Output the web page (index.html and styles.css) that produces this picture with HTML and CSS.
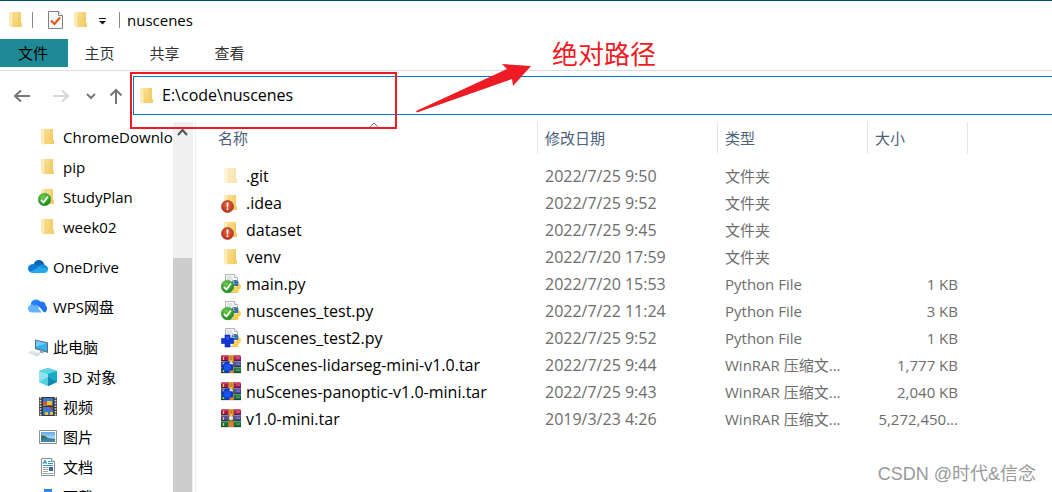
FILE: index.html
```html
<!DOCTYPE html>
<html lang="zh-CN">

<head>
    <meta charset="UTF-8">
    <meta name="viewport" content="width=device-width, initial-scale=1.0">
    <title>nuscenes</title>

    <link rel="stylesheet" href="styles.css">
</head>

<body>
    <!-- Shared icons -->
    <svg class="icon-defs" aria-hidden="true">
        <defs>
            <linearGradient id="folder-front" x1="0" y1="0" x2="1" y2="1">
                <stop offset="0" stop-color="#fbdf93" />
                <stop offset="1" stop-color="#f2cb62" />
            </linearGradient>
            <radialGradient id="green-ball" cx="0.4" cy="0.3" r="0.7">
                <stop offset="0" stop-color="#6fcb4c" />
                <stop offset="1" stop-color="#17881b" />
            </radialGradient>
            <radialGradient id="red-ball" cx="0.5" cy="0.4" r="0.6">
                <stop offset="0" stop-color="#ee6a41" />
                <stop offset="1" stop-color="#b52a14" />
            </radialGradient>
            <linearGradient id="sky" x1="0" y1="0" x2="0" y2="1">
                <stop offset="0" stop-color="#5fa9e8" />
                <stop offset="1" stop-color="#e4f4fb" />
            </linearGradient>
            <linearGradient id="wps-cloud" x1="0" y1="0" x2="1" y2="1">
                <stop offset="0" stop-color="#2494ff" />
                <stop offset="1" stop-color="#1b63ee" />
            </linearGradient>
        </defs>
        <symbol id="folder" viewBox="0 0 20 20">
            <path d="M5 2h10v11h1v4H6z" fill="url(#folder-front)" />
            <path d="M12 2h3v11h-3z" fill="#efc75f" opacity=".5" />
            <path d="M3 2h2l2 2v14l-3-1-1-1z" fill="#fdebb5" />
            <path d="M7 4v13" stroke="#e9c468" stroke-width=".5" />
        </symbol>
        <symbol id="check-ball" viewBox="0 0 20 20">
            <circle cx="6.500" cy="12.500" r="6.300" fill="url(#green-ball)" stroke="#3a9a35" stroke-width=".5" />
            <path d="M3 13l2.500 2.500 4.500-6" fill="none" stroke="#fff" stroke-width="1.800" />
        </symbol>
        <symbol id="alert-ball" viewBox="0 0 20 20">
            <circle cx="6.500" cy="13.500" r="6" fill="url(#red-ball)" stroke="#a8473a" stroke-width=".8" />
            <path d="M5.500 9.500h2l-.4 5h-1.200z" fill="#fff" />
            <circle cx="6.500" cy="16.300" r="1" fill="#fff" />
        </symbol>
        <symbol id="python" viewBox="0 0 20 20">
            <path d="M4.500.5h9l3 3v15h-12z" fill="#f5f5f5" stroke="#b5b5b5" />
            <path d="M13.500.5v3h3" fill="#fff" stroke="#b5b5b5" />
            <path d="M6 3h5M6 5h6" stroke="#c8ccd2" />
            <path d="M10.500 8.500q0-2.500 3.500-2.500t3.500 2.500v3.500h-4q-2.500 0-2.500 2.500H10Q8 14.500 8 12t2.500-2.500h3.500v-.6h-3.500z" fill="#3972a4" />
            <path d="M17.800 9.500h.4q1.800.5 1.800 3t-2 3h-4v.6h3.500v1q0 1.900-3 1.900t-3-2v-2q0-2.300 2.500-2.300h2.500q1.300 0 1.300-2z" fill="#fbce45" />
            <circle cx="12.500" cy="7.700" r=".6" fill="#fff" />
        </symbol>
        <symbol id="plus-badge" viewBox="0 0 20 20">
            <path d="M4 7h5v3.500h3.500v5H9V19H4v-3.500H.5v-5H4z" fill="#1235d4" stroke="#0b1fae" stroke-width=".6" />
            <path d="M5 8.500h3v3H5z" fill="#2458f2" />
        </symbol>
        <symbol id="rar" viewBox="0 0 20 20">
            <path d="M0 1l1.500-1H18l2 1v5H0z" fill="#a81b4b" />
            <path d="M0 1l1.500-1H18l2 1v.8H0z" fill="#d3527b" />
            <path d="M0 6h20v6H0z" fill="#4a4a9c" />
            <path d="M0 6h20v1.200H0z" fill="#8584c7" />
            <path d="M0 12h20v6H0z" fill="#11733a" />
            <path d="M0 12h20v1.200H0z" fill="#4bac68" />
            <path d="M0 5.500h20M0 11.500h20M0 17.700h20" stroke="#262137" stroke-width=".7" />
            <path d="M2.500 2v3M2.500 8v3M2.500 14v3" stroke="#efc54a" stroke-width="1.200" />
            <path d="M15 3h4M15 9h4M15 15h4" stroke="#d6c7d8" stroke-width=".6" />
            <path d="M7 0h6v18H7z" fill="#b9722c" />
            <path d="M8 0h4v6H8z" fill="#f2a93a" />
            <path d="M8.500 2h3M8.500 4h3" stroke="#84521c" stroke-width=".8" />
            <path d="M6.500 7h7v5h-7z" fill="#6a5a4a" />
            <path d="M8 7.500h4v3H8zM9.300 6h1.400v5.500H9.300z" fill="#e9e4dc" />
            <path d="M8 13h4v5H8z" fill="#d18334" />
        </symbol>
        <symbol id="rar-badge" viewBox="0 0 20 20">
            <path d="M4 6.500h4.500V9l3.500.5v5.500l-3.500.7V18H4v-2.300L.8 14.500v-5L4 9z" fill="#0c38c8" />
            <circle cx="6.300" cy="12.200" r="3.500" fill="#1754f0" />
        </symbol>
    </svg>

    <header class="title-bar">
        <svg class="icon"><use href="#folder" /></svg>
        <span class="divider"></span>
        <button type="button" class="quick-button properties" aria-label="属性">
            <svg class="icon" viewBox="0 0 20 20">
                <path d="M3.500 1.500h10l4 4v13h-14z" fill="#f8f8f8" stroke="#828282" />
                <path d="M13.500 1.500v4h4" fill="#fff" stroke="#828282" />
                <path d="M6 10.500l3.500 3.500L15 7.500" fill="none" stroke="#e4551b" stroke-width="2" />
            </svg>
        </button>
        <button type="button" class="quick-button" aria-label="新建文件夹">
            <svg class="icon"><use href="#folder" /></svg>
        </button>
        <button type="button" class="quick-button customize" aria-label="自定义快速访问工具栏">
            <svg width="12" height="10" viewBox="0 0 12 10">
                <path d="M2 3.500h7" stroke="#111" />
                <path d="M2 6h7L5.500 9.500z" fill="#111" />
            </svg>
        </button>
        <span class="divider"></span>
        <span class="window-title">nuscenes</span>
    </header>

    <div class="ribbon">
        <button type="button" class="tab file-tab">文件</button>
        <button type="button" class="tab">主页</button>
        <button type="button" class="tab">共享</button>
        <button type="button" class="tab">查看</button>
    </div>

    <div class="nav-bar">
        <button type="button" class="nav-button back" aria-label="后退">
            <svg width="18" height="14" viewBox="0 0 18 14">
                <path d="M17 7H2M8 1.500L2 7l6 5.500" />
            </svg>
        </button>
        <button type="button" class="nav-button forward" aria-label="前进" disabled>
            <svg width="18" height="14" viewBox="0 0 18 14">
                <path d="M1 7h15M10 1.500L16 7l-6 5.500" />
            </svg>
        </button>
        <button type="button" class="nav-button recent" aria-label="最近浏览的位置">
            <svg width="10" height="8" viewBox="0 0 10 8">
                <path d="M1 2l4 4 4-4" />
            </svg>
        </button>
        <button type="button" class="nav-button up" aria-label="向上">
            <svg width="14" height="18" viewBox="0 0 14 18">
                <path d="M7 17V3M1.500 8.500L7 3l5.500 5.500" />
            </svg>
        </button>
        <div class="address-bar">
            <svg class="icon"><use href="#folder" /></svg>
            <input type="text" class="address-input" aria-label="地址" value="E:\code\nuscenes">
        </div>
    </div>

    <div class="content">
        <nav class="sidebar">
            <div class="tree">
                <div class="tree-group">
                    <a href="#" class="tree-item child"><svg class="icon"><use href="#folder" /></svg>ChromeDownload</a>
                    <a href="#" class="tree-item child"><svg class="icon"><use href="#folder" /></svg>pip</a>
                    <a href="#" class="tree-item child">
                        <svg class="icon"><use href="#folder" /><use href="#check-ball" /></svg>StudyPlan</a>
                    <a href="#" class="tree-item child"><svg class="icon"><use href="#folder" /></svg>week02</a>
                </div>
                <div class="tree-group">
                    <a href="#" class="tree-item">
                        <svg class="icon" viewBox="0 0 20 20">
                            <path d="M5.500 8Q6.500 3 11 3q4 0 5.500 5l-5 4z" fill="#0a63b8" />
                            <path d="M4 15.500Q0 15 0 11.500 0 7.500 5 7q3-.5 6 2l4 3-8 3.500z" fill="#0f7bd7" />
                            <path d="M10 9.500q2-2.500 5.500-1.800Q20 8.500 20 12l-3 2z" fill="#1691df" />
                            <path d="M2 15l9-5 9 2q0 4-4 4H5q-2 0-3-1z" fill="#27a8ea" />
                        </svg>OneDrive</a>
                </div>
                <div class="tree-group">
                    <a href="#" class="tree-item">
                        <svg class="icon" viewBox="0 0 20 20">
                            <path d="M2.500 8.500Q3 2.500 8 2.500q4 0 5.500 4.500l-4 5z" fill="url(#wps-cloud)" />
                            <path d="M9 7q2-3 5-2.500 3.500.5 3.700 4 1.800 1.500 1.300 4-.6 3-3 3z" fill="#2374f5" />
                            <path d="M3.500 15.500Q0 15 0 11.500 0 8 4 7.500q3 0 5 2.500l5 5.500z" fill="#63b5ff" />
                            <path d="M8 8.500q3 .3 6 7" fill="none" stroke="#fff" stroke-width=".8" />
                        </svg>WPS网盘</a>
                </div>
                <div class="tree-group">
                    <a href="#" class="tree-item">
                        <svg class="icon" viewBox="0 0 20 20">
                            <path d="M7 2.500l13 3V16L7 12z" fill="#5a6d7b" />
                            <path d="M8 3.800l11 2.600v8.200L8 11z" fill="#35aef3" />
                            <path d="M8 3.800l11 2.600-11 3z" fill="#6fcbfa" />
                            <path d="M12.500 13.500l3 .9v2l-4-.9z" fill="#9aa5ad" />
                            <path d="M0 15.500l4-1.500 9 2.500-4 2.700z" fill="#c9cfd4" />
                            <path d="M2 15.500l7 2M4 14.800l7 2" stroke="#fff" stroke-width=".6" />
                        </svg>此电脑</a>
                    <a href="#" class="tree-item child">
                        <svg class="icon" viewBox="0 0 20 20">
                            <path d="M1 4l9-3 9 3v11l-9 4-9-4z" fill="#35c2d9" />
                            <path d="M1 4l9 3v12l-9-4z" fill="#8fe3ed" />
                            <path d="M1 4l9-3 9 3-9 3z" fill="#5bd3e2" />
                            <path d="M10 7l9-3v11l-9 4z" fill="#19a9c8" />
                            <path d="M1 15l9-5v9z" fill="#54cfdf" />
                            <path d="M10 10l9 5-9 4z" fill="#128ab0" />
                        </svg>3D 对象</a>
                    <a href="#" class="tree-item child">
                        <svg class="icon" viewBox="0 0 20 20">
                            <path d="M1 0h18v19H1z" fill="#363636" />
                            <path d="M2.500 0v19M17.500 0v19" stroke="#d9d9d9" stroke-width="1.800" stroke-dasharray="1.600 1.200" />
                            <path d="M5 1h10v8H5zM5 10h10v8H5z" fill="#3b78c9" />
                            <path d="M5 5h4v4H5z" fill="#df4f32" />
                            <path d="M9 4h5v4H9z" fill="#e5c439" />
                            <path d="M10 8h4v1h-4zM12 10h3l-1 3h-1z" fill="#bd4126" />
                            <path d="M7 15h3v3H7zM12 15h3v3h-3z" fill="#e3c13c" />
                            <path d="M5 8h3v1H5z" fill="#59b14f" />
                        </svg>视频</a>
                    <a href="#" class="tree-item child">
                        <svg class="icon" viewBox="0 0 20 20">
                            <path d="M1.500 3.500h17v13h-17z" fill="#fff" stroke="#929292" />
                            <path d="M3 5h14v10H3z" fill="url(#sky)" />
                            <path d="M3 8q4 0 7 3l7 1v3H3z" fill="#3c7561" />
                            <path d="M3 12.500q7-1 14 .5v2H3z" fill="#3f86b7" />
                        </svg>图片</a>
                    <a href="#" class="tree-item child">
                        <svg class="icon" viewBox="0 0 20 20">
                            <path d="M3.500 1.500h10l3 3v14h-13z" fill="#fff" stroke="#8d8d8d" />
                            <path d="M13.500 1.500v3h3" fill="#eee" stroke="#8d8d8d" />
                            <path d="M5 7l2-4 1.500 4M5.500 5.700h3M10 4.500h2.500M10 6.500h5M5 8.500h10" fill="none" stroke="#2592d2" />
                            <path d="M5 10.500h5M5 12.500h5M5 14.500h5M5 16.500h10" stroke="#a3a3a3" />
                            <path d="M11 10h4v4h-4z" fill="#356b9c" />
                        </svg>文档</a>
                    <a href="#" class="tree-item child">
                        <svg class="icon" viewBox="0 0 20 20">
                            <path d="M6 2h8v7h4l-8 9-8-9h4z" fill="#2e86d8" />
                        </svg>下载</a>
                </div>
            </div>
            <div class="scrollbar">
                <svg class="scroll-up" width="20" height="20" viewBox="0 0 20 20">
                    <path d="M5 13l4.500-5 4.500 5" />
                </svg>
                <div class="scroll-thumb"></div>
            </div>
        </nav>

        <main class="file-pane">
            <table class="file-table">
                <thead>
                    <tr>
                        <th class="col-name">名称
                            <svg class="sort-arrow" width="10" height="6" viewBox="0 0 10 6"><path d="M1 5l4-4 4 4" /></svg>
                        </th>
                        <th class="col-date">修改日期</th>
                        <th class="col-type">类型</th>
                        <th class="col-size">大小</th>
                    </tr>
                </thead>
                <tbody>
                    <tr>
                        <td><a href="#" class="file-name"><svg class="icon hidden-folder"><use href="#folder" /></svg>.git</a></td>
                        <td class="date">2022/7/25 9:50</td>
                        <td>文件夹</td>
                        <td></td>
                    </tr>
                    <tr>
                        <td><a href="#" class="file-name"><svg class="icon"><use href="#folder" /><use href="#alert-ball" /></svg>.idea</a></td>
                        <td class="date">2022/7/25 9:52</td>
                        <td>文件夹</td>
                        <td></td>
                    </tr>
                    <tr>
                        <td><a href="#" class="file-name"><svg class="icon"><use href="#folder" /><use href="#alert-ball" /></svg>dataset</a></td>
                        <td class="date">2022/7/25 9:45</td>
                        <td>文件夹</td>
                        <td></td>
                    </tr>
                    <tr>
                        <td><a href="#" class="file-name"><svg class="icon"><use href="#folder" /></svg>venv</a></td>
                        <td class="date">2022/7/20 17:59</td>
                        <td>文件夹</td>
                        <td></td>
                    </tr>
                    <tr>
                        <td><a href="#" class="file-name"><svg class="icon"><use href="#python" /><use href="#check-ball" /></svg>main.py</a></td>
                        <td class="date">2022/7/20 15:53</td>
                        <td>Python File</td>
                        <td>1 KB</td>
                    </tr>
                    <tr>
                        <td><a href="#" class="file-name"><svg class="icon"><use href="#python" /><use href="#check-ball" /></svg>nuscenes_test.py</a></td>
                        <td class="date">2022/7/22 11:24</td>
                        <td>Python File</td>
                        <td>3 KB</td>
                    </tr>
                    <tr>
                        <td><a href="#" class="file-name"><svg class="icon"><use href="#python" /><use href="#plus-badge" /></svg>nuscenes_test2.py</a></td>
                        <td class="date">2022/7/25 9:52</td>
                        <td>Python File</td>
                        <td>1 KB</td>
                    </tr>
                    <tr>
                        <td><a href="#" class="file-name"><svg class="icon"><use href="#rar" /><use href="#rar-badge" /></svg>nuScenes-lidarseg-mini-v1.0.tar</a></td>
                        <td class="date">2022/7/25 9:44</td>
                        <td>WinRAR 压缩文...</td>
                        <td>1,777 KB</td>
                    </tr>
                    <tr>
                        <td><a href="#" class="file-name"><svg class="icon"><use href="#rar" /><use href="#rar-badge" /></svg>nuScenes-panoptic-v1.0-mini.tar</a></td>
                        <td class="date">2022/7/25 9:43</td>
                        <td>WinRAR 压缩文...</td>
                        <td>2,040 KB</td>
                    </tr>
                    <tr>
                        <td><a href="#" class="file-name"><svg class="icon"><use href="#rar" /></svg>v1.0-mini.tar</a></td>
                        <td class="date">2019/3/23 4:26</td>
                        <td>WinRAR 压缩文...</td>
                        <td>5,272,450...</td>
                    </tr>
                </tbody>
            </table>
        </main>
    </div>

    <!-- Notes drawn over the window -->
    <div class="mark-box"></div>
    <svg class="mark-arrow" width="118" height="52" viewBox="0 0 118 52">
        <path d="M2 50L93 8l-5-5 29 2-18 20-1-7L3 51.500z" />
    </svg>
    <div class="mark-text">绝对路径</div>
    <div class="watermark">CSDN @时代&amp;信念</div>
</body>

</html>
```
FILE: styles.css
```css
* {
    box-sizing: border-box;
}

body {
    margin: 0;
    height: 100vh;
    display: flex;
    flex-direction: column;
    position: relative;
    overflow: hidden;
    background-color: white;
    border-top: 1px solid #00506a;
    color: black;
    font-family: "Open Sans", "Noto Sans CJK SC", sans-serif;
    font-size: 15px;
    line-height: 20px;
}

button,
input {
    font: inherit;
    color: inherit;
    background-color: transparent;
    border: none;
    padding: 0;
}

a {
    color: inherit;
    text-decoration: none;
}

.icon-defs {
    position: absolute;
    width: 0;
    height: 0;
}

.icon {
    display: block;
    flex-shrink: 0;
    width: 20px;
    height: 20px;
}

/* Title bar */
.title-bar {
    display: flex;
    align-items: center;
    gap: 6px;
    height: 38px;
    padding-left: 6px;
}

.divider {
    width: 1px;
    height: 16px;
    background-color: #8a8a8a;
}

.quick-button {
    display: flex;
}

.properties {
    margin-left: 6px;
}

.customize {
    margin-right: 4px;
}

.window-title {
    padding-left: 1px;
}

/* Ribbon tabs */
.ribbon {
    display: flex;
    padding-bottom: 3px;
    border-bottom: 1px solid #dadbdc;
}

.tab {
    width: 65px;
    height: 28px;
    padding-right: 2px;
    color: #333;
}

.file-tab {
    width: 68px;
    background-color: #1e8a96;
    color: black;
}

/* Navigation buttons and address */
.nav-bar {
    display: flex;
    padding: 5px 0 7px;
}

.nav-button {
    display: flex;
    align-items: center;
    justify-content: center;
    width: 25px;
}

.nav-button path {
    fill: none;
    stroke: #777;
    stroke-width: 2;
}

.nav-button.back {
    width: 44px;
}

.nav-button.forward {
    width: 34px;
}

.nav-button.forward path {
    stroke: #d6d6d6;
}

.address-bar {
    flex: 1;
    display: flex;
    align-items: center;
    gap: 5px;
    height: 39px;
    margin-left: 5px;
    padding-left: 3px;
    border: 1px solid #0078d7;
    border-right: none;
}

.address-input {
    flex: 1;
    min-width: 0;
    padding-bottom: 2px;
    outline: none;
    font-size: 16px;
}

/* Folder tree */
.content {
    flex: 1;
    display: flex;
    min-height: 0;
}

.sidebar {
    display: flex;
    width: 196px;
    flex-shrink: 0;
    padding-right: 2px;
    border-right: 1px solid #f0f0f0;
}

.tree {
    flex: 1;
    display: flex;
    flex-direction: column;
    gap: 10px;
    min-width: 0;
    overflow: hidden;
}

.tree-item {
    display: flex;
    align-items: center;
    gap: 5px;
    height: 30px;
    padding-left: 28px;
    white-space: nowrap;
}

.tree-item.child {
    padding-left: 38px;
}

.scrollbar {
    display: flex;
    flex-direction: column;
    gap: 116px;
    width: 20px;
    background-color: #f0f0f0;
}

.scroll-up {
    flex-shrink: 0;
    fill: none;
    stroke: #505050;
    stroke-width: 2;
}

.scroll-thumb {
    flex: 1;
    margin-right: 1px;
    background-color: #cdcdcd;
}

/* File list */
.file-pane {
    flex: 1;
    padding-left: 15px;
    overflow: hidden;
}

.file-table {
    width: 757px;
    table-layout: fixed;
    border-collapse: separate;
    border-spacing: 0;
    color: #6d6d6d;
}

.file-table th {
    position: relative;
    height: 32px;
    padding: 0 7px;
    border-right: 1px solid #e5e5e5;
    color: #4c607a;
    font-weight: normal;
    text-align: left;
}

.col-name {
    width: 327px;
}

.col-date {
    width: 180px;
}

.col-type {
    width: 150px;
}

.col-size {
    width: 100px;
}

.sort-arrow {
    position: absolute;
    top: 0;
    left: calc(50% - 5px);
    fill: none;
    stroke: #777;
}

.file-table tbody::before {
    content: "";
    display: block;
    height: 8px;
}

.file-table td {
    height: 27px;
    padding: 0 7px;
    white-space: nowrap;
}

.file-table td:first-child {
    padding-left: 10px;
}

.file-table td:last-child {
    padding-right: 10px;
    text-align: right;
}

.file-table .date {
    font-size: 16px;
}

.file-name {
    display: flex;
    align-items: center;
    gap: 5px;
    color: black;
    font-size: 16px;
}

.hidden-folder {
    opacity: 0.5;
}

/* Notes over the window */
.mark-box {
    position: absolute;
    top: 71px;
    left: 130px;
    width: 267px;
    height: 57px;
    border: 2px solid #ed1c24;
}

.mark-arrow {
    position: absolute;
    top: 60px;
    left: 414px;
    fill: #ed1c24;
}

.mark-text {
    position: absolute;
    top: 37px;
    left: 552px;
    color: #ed1c24;
    font-size: 26px;
    line-height: 32px;
}

.watermark {
    position: absolute;
    right: 16px;
    bottom: 6px;
    color: #999;
    font-family: "Liberation Sans", "Noto Sans CJK SC", sans-serif;
    font-size: 18px;
    line-height: 24px;
}
```
